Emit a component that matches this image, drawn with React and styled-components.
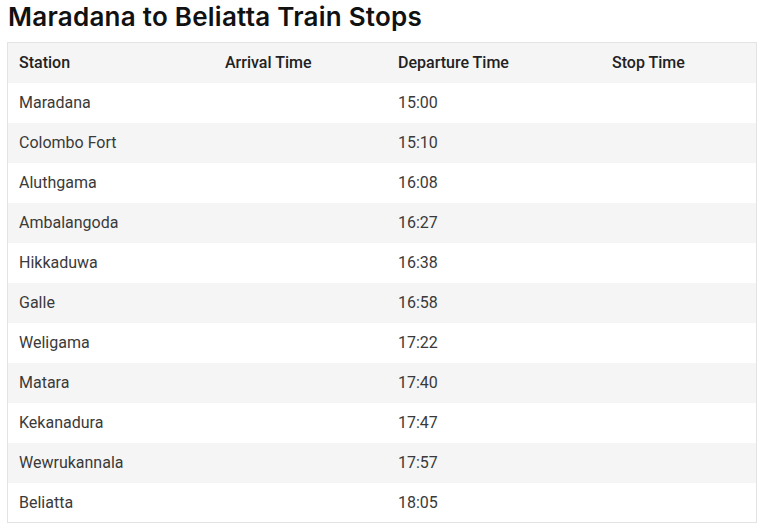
import React from "react";
import styled, { createGlobalStyle } from "styled-components";

const stops = [
  { station: "Maradana", arrival: "", departure: "15:00", stop: "" },
  { station: "Colombo Fort", arrival: "", departure: "15:10", stop: "" },
  { station: "Aluthgama", arrival: "", departure: "16:08", stop: "" },
  { station: "Ambalangoda", arrival: "", departure: "16:27", stop: "" },
  { station: "Hikkaduwa", arrival: "", departure: "16:38", stop: "" },
  { station: "Galle", arrival: "", departure: "16:58", stop: "" },
  { station: "Weligama", arrival: "", departure: "17:22", stop: "" },
  { station: "Matara", arrival: "", departure: "17:40", stop: "" },
  { station: "Kekanadura", arrival: "", departure: "17:47", stop: "" },
  { station: "Wewrukannala", arrival: "", departure: "17:57", stop: "" },
  { station: "Beliatta", arrival: "", departure: "18:05", stop: "" },
];

const GlobalStyle = createGlobalStyle`
  body {
    margin: 0;
    background: #fff;
    font-family: Roboto, "Liberation Sans", sans-serif;
  }
`;

const Page = styled.div`
  padding: 0 7px 0 7px;
`;

const Title = styled.h2`
  margin: 0 0 9px 1px;
  padding-top: 1px;
  font-family: Inter, "Liberation Sans", sans-serif;
  font-size: 26px;
  font-weight: 600;
  line-height: 32px;
  color: #111;
  letter-spacing: 0.25px;
`;

const Table = styled.table`
  width: 750px;
  border-collapse: collapse;
  border: 1px solid #e3e3e3;
  font-size: 16px;
  color: #3a3a3a;
`;

const Row = styled.tr`
  height: 40px;
  background: ${(p) => (p.$striped ? "#f5f5f5" : "#fff")};
`;

const HeadCell = styled.th`
  text-align: left;
  font-weight: 500;
  color: #222;
  padding: 0 11px;
  width: ${(p) => p.$w}px;
`;

const Cell = styled.td`
  padding: 0 11px;
`;

export default function App() {
  return (
    <Page>
      <GlobalStyle />
      <Title>Maradana to Beliatta Train Stops</Title>
      <Table>
        <thead>
          <Row $striped>
            <HeadCell $w={184}>Station</HeadCell>
            <HeadCell $w={151}>Arrival Time</HeadCell>
            <HeadCell $w={192}>Departure Time</HeadCell>
            <HeadCell>Stop Time</HeadCell>
          </Row>
        </thead>
        <tbody>
          {stops.map((s, i) => (
            <Row key={s.station} $striped={i % 2 === 1}>
              <Cell>{s.station}</Cell>
              <Cell>{s.arrival}</Cell>
              <Cell>{s.departure}</Cell>
              <Cell>{s.stop}</Cell>
            </Row>
          ))}
        </tbody>
      </Table>
    </Page>
  );
}
